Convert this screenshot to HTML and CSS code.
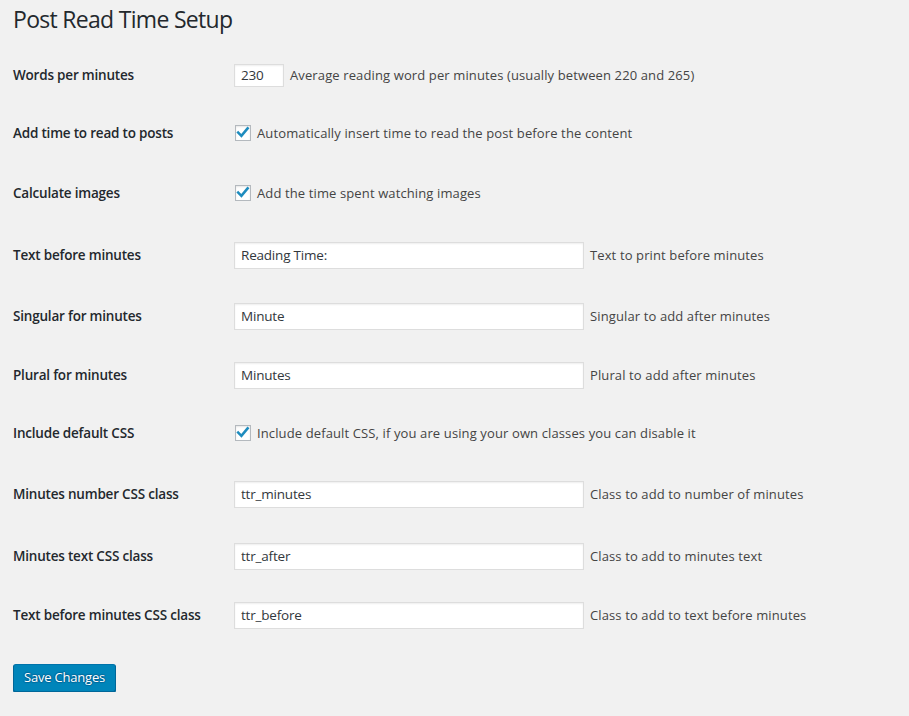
FILE: index.html
```html
<!DOCTYPE html>
<html lang="en">
<head>
<meta charset="utf-8">
<title>Post Read Time Setup</title>
<link rel="stylesheet" href="styles.css">
</head>
<body>
<div class="wrap">
  <h1 class="title">Post Read Time Setup</h1>
  <form class="form-table">
    <div class="row h58">
      <div class="label">Words per minutes</div>
      <div class="field"><input class="small-text" type="text" value="230"><span class="desc">Average reading word per minutes (usually between 220 and 265)</span></div>
    </div>
    <div class="row h58">
      <div class="label">Add time to read to posts</div>
      <div class="field"><span class="check"><svg viewBox="0 0 16 16" width="16" height="16"><path d="M3.2 7.6 L6.4 10.8 L12.6 3.4" fill="none" stroke="#1e8cbe" stroke-width="2.6" stroke-linecap="square" stroke-linejoin="miter"/></svg></span><span class="cdesc">Automatically insert time to read the post before the content</span></div>
    </div>
    <div class="row h62">
      <div class="label">Calculate images</div>
      <div class="field"><span class="check"><svg viewBox="0 0 16 16" width="16" height="16"><path d="M3.2 7.6 L6.4 10.8 L12.6 3.4" fill="none" stroke="#1e8cbe" stroke-width="2.6" stroke-linecap="square" stroke-linejoin="miter"/></svg></span><span class="cdesc">Add the time spent watching images</span></div>
    </div>
    <div class="row h62">
      <div class="label">Text before minutes</div>
      <div class="field"><input class="regular-text" type="text" value="Reading Time:"><span class="desc">Text to print before minutes</span></div>
    </div>
    <div class="row h60">
      <div class="label">Singular for minutes</div>
      <div class="field"><input class="regular-text" type="text" value="Minute"><span class="desc">Singular to add after minutes</span></div>
    </div>
    <div class="row h58">
      <div class="label">Plural for minutes</div>
      <div class="field"><input class="regular-text" type="text" value="Minutes"><span class="desc">Plural to add after minutes</span></div>
    </div>
    <div class="row h58">
      <div class="label">Include default CSS</div>
      <div class="field"><span class="check"><svg viewBox="0 0 16 16" width="16" height="16"><path d="M3.2 7.6 L6.4 10.8 L12.6 3.4" fill="none" stroke="#1e8cbe" stroke-width="2.6" stroke-linecap="square" stroke-linejoin="miter"/></svg></span><span class="cdesc">Include default CSS, if you are using your own classes you can disable it</span></div>
    </div>
    <div class="row h64">
      <div class="label">Minutes number CSS class</div>
      <div class="field"><input class="regular-text" type="text" value="ttr_minutes"><span class="desc">Class to add to number of minutes</span></div>
    </div>
    <div class="row h60">
      <div class="label">Minutes text CSS class</div>
      <div class="field"><input class="regular-text" type="text" value="ttr_after"><span class="desc">Class to add to minutes text</span></div>
    </div>
    <div class="row h58">
      <div class="label">Text before minutes CSS class</div>
      <div class="field"><input class="regular-text" type="text" value="ttr_before"><span class="desc">Class to add to text before minutes</span></div>
    </div>
    <div class="submit">
      <button type="button" class="button-primary">Save Changes</button>
    </div>
  </form>
</div>
</body>
</html>
```
FILE: styles.css
```css
html, body {
  margin: 0;
  padding: 0;
  background: #f1f1f1;
}
body {
  font-family: "Open Sans", "Noto Sans", sans-serif;
  color: #23282d;
  font-size: 13px;
}
.wrap {
  padding: 0 13px;
}
.title {
  margin: 0;
  padding: 5px 0 12px;
  font-size: 23px;
  line-height: 29px;
  font-weight: 400;
  color: #23282d;
  letter-spacing: -0.7px;
}
.form-table {
  display: flex;
  flex-direction: column;
}
.row {
  display: grid;
  grid-template-columns: 221px 1fr;
  align-items: center;
}
.h58 { height: 58px; }
.h60 { height: 60px; }
.h62 { height: 62px; }
.h64 { height: 64px; }
.label {
  font-size: 13.5px;
  font-weight: 600;
  color: #23282d;
  line-height: 18px;
  letter-spacing: -0.2px;
}
.field {
  display: flex;
  align-items: center;
}
input[type="text"] {
  box-sizing: border-box;
  font-family: inherit;
  font-size: 13.5px;
  color: #32373c;
  background: #fff;
  border: 1px solid #ddd;
  box-shadow: inset 0 1px 2px rgba(0,0,0,0.07);
  margin: 0;
  outline: none;
  letter-spacing: -0.2px;
}
.small-text {
  width: 50px;
  height: 23px;
  padding: 0 6px;
}
.regular-text {
  width: 350px;
  height: 27px;
  padding: 0 6px;
}
.desc {
  margin-left: 6px;
  font-size: 13px;
  color: #444;
  letter-spacing: 0.12px;
}
.check {
  box-sizing: border-box;
  width: 16px;
  height: 16px;
  border: 1px solid #b4b9be;
  background: #fff;
  box-shadow: inset 0 1px 2px rgba(0,0,0,0.1);
  display: flex;
  align-items: center;
  justify-content: center;
  margin-left: 1px;
}
.check svg {
  display: block;
  flex: none;
}
.cdesc {
  margin-left: 6px;
  font-size: 13px;
  color: #444;
  letter-spacing: 0.12px;
}
.submit {
  padding-top: 20px;
}
.button-primary {
  font-family: inherit;
  font-size: 13px;
  height: 28px;
  padding: 0 10px 2px;
  white-space: nowrap;
  color: #fff;
  background: #0085ba;
  border: 1px solid;
  border-color: #0073aa #006799 #006799;
  border-radius: 3px;
  box-shadow: 0 1px 0 #006799;
  text-shadow: 0 -1px 1px #006799, 1px 0 1px #006799, 0 1px 1px #006799, -1px 0 1px #006799;
  letter-spacing: -0.2px;
  cursor: pointer;
}
```
